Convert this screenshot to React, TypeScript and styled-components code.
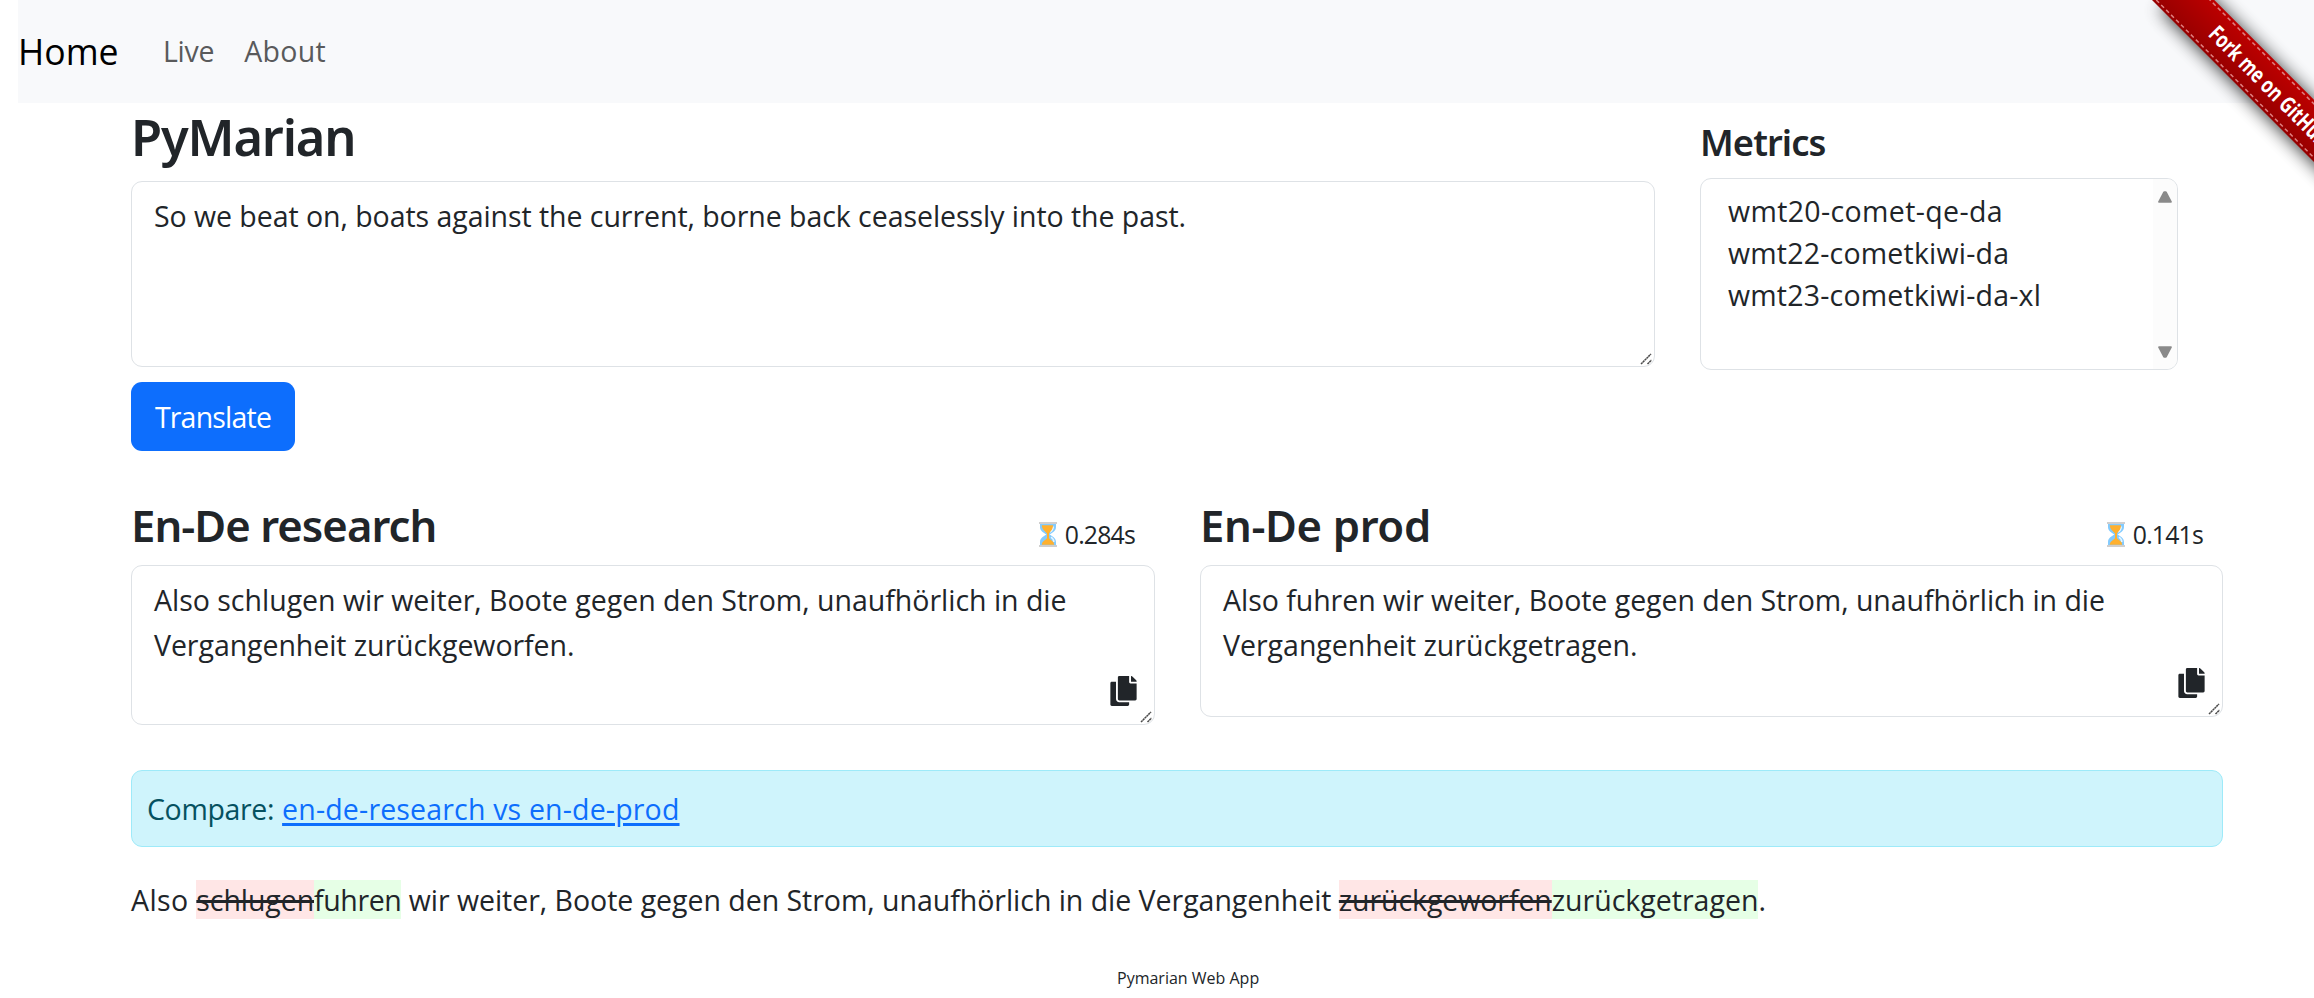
import React from "react";
import styled, { createGlobalStyle } from "styled-components";
import { FaCopy } from "react-icons/fa";

const GlobalStyle = createGlobalStyle`
  *, *::before, *::after { box-sizing: border-box; }
  body {
    margin: 0;
    background: #fff;
    color: #212529;
    font-family: "Open Sans", "Noto Sans", sans-serif;
    font-size: 28.5px;
    line-height: 45px;
    overflow: hidden;
  }
`;

const Page = styled.div`
  position: relative;
  height: 998px;
  overflow: hidden;
`;

const Navbar = styled.nav`
  display: flex;
  align-items: center;
  height: 103px;
  margin-left: 18px;
  background: #f8f9fb;
`;

const Brand = styled.a`
  width: 145px;
  color: #000;
  font-size: 35.6px;
`;

const NavLink = styled.a<{ $spacing: number }>`
  margin-right: 30px;
  color: #595a5b;
  letter-spacing: ${(p) => p.$spacing}px;
`;

const Main = styled.main`
  width: 2092px;
  margin-left: 131px;
`;

const TopRow = styled.section`
  display: flex;
  gap: 45px;
`;

const SourceColumn = styled.div`
  display: flex;
  flex-direction: column;
  align-items: flex-start;
  width: 1524px;
`;

const MetricsColumn = styled.div`
  width: 478px;
  padding-top: 16px;
`;

const Title = styled.h1`
  margin: 0 0 11px;
  font: 570 50.6px/67px "Noto Sans", sans-serif;
  letter-spacing: -1.15px;
`;

const MetricsTitle = styled.h3`
  margin: 0 0 13px;
  font: 570 36.3px/46px "Noto Sans", sans-serif;
  letter-spacing: -0.9px;
`;

const TextBox = styled.div<{ $height: number }>`
  position: relative;
  width: 100%;
  height: ${(p) => p.$height}px;
  padding: 12px 22px;
  border: 1px solid #dee2e6;
  border-radius: 11px;
`;

const Grip = styled.svg`
  position: absolute;
  right: 1px;
  bottom: 1px;
  width: 13px;
  height: 13px;
`;

const TextLine = styled.div<{ $spacing?: number }>`
  letter-spacing: ${(p) => p.$spacing ?? 0}px;
  white-space: nowrap;
`;

const ListBox = styled.div`
  display: flex;
  justify-content: space-between;
  height: 192px;
  border: 1px solid #dee2e6;
  border-radius: 11px;
  overflow: hidden;
`;

const Options = styled.ul`
  margin: 0;
  padding: 11px 0 0 27px;
  list-style: none;
`;

const Option = styled.li<{ $spacing: number }>`
  line-height: 42px;
  letter-spacing: ${(p) => p.$spacing}px;
`;

const ScrollTrack = styled.div`
  display: flex;
  flex-direction: column;
  justify-content: space-between;
  align-items: center;
  width: 24px;
  padding: 12px 0 11px;
  background: #fcfcfc;
`;

const TranslateButton = styled.button`
  width: 164px;
  height: 69px;
  margin-top: 15px;
  padding: 2px 0 0;
  border: 0;
  border-radius: 11px;
  background: #0d6efd;
  color: #fff;
  font: inherit;
  letter-spacing: -0.8px;
`;

const Results = styled.section`
  display: flex;
  align-items: flex-start;
  justify-content: space-between;
  height: 319px;
  padding-top: 47px;
`;

const ResultColumn = styled.article<{ $width: number }>`
  width: ${(p) => p.$width}px;
`;

const ResultHeader = styled.header`
  display: flex;
  justify-content: space-between;
  height: 67px;
`;

const ResultTitle = styled.h2<{ $spacing: number }>`
  margin: 0;
  font: 570 43.6px/54px "Noto Sans", sans-serif;
  letter-spacing: ${(p) => p.$spacing}px;
`;

const Timing = styled.div`
  display: flex;
  align-items: center;
  gap: 8px;
  height: 45px;
  margin: 14px 20px 0 0;
  font-size: 24.8px;
  letter-spacing: -0.8px;
`;

const CopyIcon = styled(FaCopy)`
  position: absolute;
  right: 17px;
  bottom: 18px;
  width: 27px;
  height: 30px;
`;

const Compare = styled.div`
  display: flex;
  align-items: center;
  gap: 8px;
  height: 77px;
  padding: 2px 0 0 15px;
  border: 1px solid #9eeaf9;
  border-radius: 11px;
  background: #cff4fc;
  color: #055160;
  letter-spacing: -0.35px;
`;

const CompareLink = styled.a`
  color: #0d6efd;
  letter-spacing: 0.17px;
  text-decoration: underline;
  text-decoration-thickness: 3px;
  text-underline-offset: 3px;
`;

const Diff = styled.p`
  margin: 30.5px 0 0;
  white-space: nowrap;
`;

const Lead = styled.span`
  letter-spacing: 0.4px;
`;

const Middle = styled.span`
  letter-spacing: -0.03px;
`;

const Deleted = styled.del`
  padding-top: 1px;
  background: #ffe6e6;
  letter-spacing: -0.08px;
  text-decoration-thickness: 3px;
`;

const Inserted = styled.ins<{ $spacing: number }>`
  padding-top: 1px;
  background: #e6ffe6;
  letter-spacing: ${(p) => p.$spacing}px;
  text-decoration: none;
`;

const Footer = styled.footer`
  margin: 43px 0 0 986px;
  font-size: 16px;
  line-height: 24px;
`;

const Ribbon = styled.svg`
  position: absolute;
  top: 0;
  right: 0;
  width: 214px;
  height: 220px;
`;

const RibbonText = styled.text`
  fill: #fff;
  font: 700 22.6px "Open Sans", sans-serif;
`;

function ResizeGrip() {
  return (
    <Grip viewBox="0 0 13 13" stroke="#4a4a4a" strokeWidth="1.5">
      <path d="M1 12L11 2M7.5 12L11.5 8" strokeDasharray="2.2 .4" />
    </Grip>
  );
}

function Arrow({ down = false }: { down?: boolean }) {
  return (
    <svg width="14" height="12" viewBox="0 0 14 12">
      <path
        d={down ? "M1 1.2h12L7.9 10.8H6.1z" : "M1 10.8h12L7.9 1.2H6.1z"}
        fill="#8a8a8a"
        stroke="#8a8a8a"
        strokeWidth="1.8"
        strokeLinejoin="round"
      />
    </svg>
  );
}

function Hourglass() {
  return (
    <svg width="18" height="25" viewBox="0 0 18 25">
      <path d="M1 2H17V5C17 9 13 11 10.5 12.5C13 14 17 16 17 20V23H1V20C1 16 5 14 7.5 12.5C5 11 1 9 1 5Z" fill="#83cbff" />
      <path d="M14.2 4.5C14.2 7.5 12.8 8.8 11 10M14.8 20C14.8 17.5 13.5 16.2 12 15.2" stroke="#e8f6ff" strokeWidth="1.6" fill="none" />
      <path d="M2.8 3.2H14C14 7.5 11.4 9.4 10 11.4V16C11 18.2 15 18.6 15.2 22.8H2.8C3 18.6 7 18.2 8 16V11.4C6.6 9.4 2.8 7.5 2.8 3.2Z" fill="#ffb02e" />
      <path d="M0 0H18V2H0ZM0 23H18V25H0Z" fill="#d0cfce" />
    </svg>
  );
}

function ForkRibbon() {
  return (
    <Ribbon viewBox="0 0 214 220">
      <defs>
        <linearGradient id="band" x1="0" y1="0" x2="0" y2="1">
          <stop offset="0" stopColor="#bd0000" />
          <stop offset="1" stopColor="#970000" />
        </linearGradient>
        <filter id="soft" x="-20%" y="-100%" width="140%" height="300%">
          <feGaussianBlur stdDeviation="9" />
        </filter>
      </defs>
      <g transform="translate(52 0) rotate(45)">
        <rect x="14" y="-43" width="330" height="44" fill="#000" opacity=".8" filter="url(#soft)" />
        <rect x="-60" y="-44" width="420" height="44" fill="url(#band)" />
        <path d="M-60 -41H360M-60 -3H360" stroke="#e08080" strokeWidth="1.5" strokeDasharray="4 3" />
        <RibbonText transform="translate(64 -14) scale(.75 1)">Fork me on GitHub</RibbonText>
      </g>
    </Ribbon>
  );
}

export default function App() {
  return (
    <Page>
      <GlobalStyle />
      <Navbar>
        <Brand>Home</Brand>
        <NavLink $spacing={-0.3}>Live</NavLink>
        <NavLink $spacing={0.3}>About</NavLink>
      </Navbar>
      <Main>
        <TopRow>
          <SourceColumn>
            <Title>PyMarian</Title>
            <TextBox $height={186}>
              <TextLine $spacing={-0.05}>
                So we beat on, boats against the current, borne back ceaselessly into the past.
              </TextLine>
              <ResizeGrip />
            </TextBox>
            <TranslateButton>Translate</TranslateButton>
          </SourceColumn>
          <MetricsColumn>
            <MetricsTitle>Metrics</MetricsTitle>
            <ListBox>
              <Options>
                <Option $spacing={0.36}>wmt20-comet-qe-da</Option>
                <Option $spacing={0.2}>wmt22-cometkiwi-da</Option>
                <Option $spacing={0.2}>wmt23-cometkiwi-da-xl</Option>
              </Options>
              <ScrollTrack>
                <Arrow />
                <Arrow down />
              </ScrollTrack>
            </ListBox>
          </MetricsColumn>
        </TopRow>
        <Results>
          <ResultColumn $width={1024}>
            <ResultHeader>
              <ResultTitle $spacing={-0.95}>En-De research</ResultTitle>
              <Timing>
                <Hourglass />
                0.284s
              </Timing>
            </ResultHeader>
            <TextBox $height={160}>
              <TextLine $spacing={-0.01}>Also schlugen wir weiter, Boote gegen den Strom, unaufhörlich in die</TextLine>
              <TextLine $spacing={-0.06}>Vergangenheit zurückgeworfen.</TextLine>
              <CopyIcon />
              <ResizeGrip />
            </TextBox>
          </ResultColumn>
          <ResultColumn $width={1023}>
            <ResultHeader>
              <ResultTitle $spacing={-0.35}>En-De prod</ResultTitle>
              <Timing>
                <Hourglass />
                0.141s
              </Timing>
            </ResultHeader>
            <TextBox $height={152}>
              <TextLine $spacing={-0.04}>Also fuhren wir weiter, Boote gegen den Strom, unaufhörlich in die</TextLine>
              <TextLine $spacing={-0.01}>Vergangenheit zurückgetragen.</TextLine>
              <CopyIcon />
              <ResizeGrip />
            </TextBox>
          </ResultColumn>
        </Results>
        <Compare>
          Compare: <CompareLink>en-de-research vs en-de-prod</CompareLink>
        </Compare>
        <Diff>
          <Lead>Also </Lead>
          <Deleted>schlugen</Deleted>
          <Inserted $spacing={-0.4}>fuhren</Inserted>
          <Middle> wir weiter, Boote gegen den Strom, unaufhörlich in die Vergangenheit </Middle>
          <Deleted>zurückgeworfen</Deleted>
          <Inserted $spacing={0}>zurückgetragen</Inserted>.
        </Diff>
        <Footer>Pymarian Web App</Footer>
      </Main>
      <ForkRibbon />
    </Page>
  );
}
